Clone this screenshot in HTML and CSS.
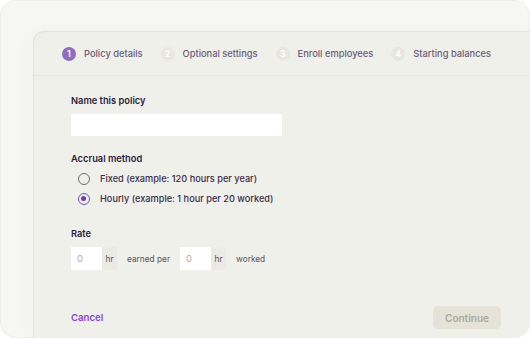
FILE: index.html
```html
<!DOCTYPE html>
<html>
<head>
<meta charset="utf-8">
<link rel="stylesheet" href="styles.css">
</head>
<body>
<div class="outer">
  <div class="card">
    <div class="steps">
      <div class="step active"><span class="num">1</span><span class="label">Policy details</span></div>
      <div class="step"><span class="num">2</span><span class="label">Optional settings</span></div>
      <div class="step"><span class="num">3</span><span class="label">Enroll employees</span></div>
      <div class="step"><span class="num">4</span><span class="label">Starting balances</span></div>
    </div>
    <div class="form">
      <div class="field">
        <div class="flabel">Name this policy</div>
        <div class="text-input"></div>
      </div>
      <div class="field">
        <div class="flabel">Accrual method</div>
        <div class="radios">
          <div class="radio"><span class="dot"></span><span>Fixed (example: 120 hours per year)</span></div>
          <div class="radio checked"><span class="dot"></span><span>Hourly (example: 1 hour per 20 worked)</span></div>
        </div>
      </div>
      <div class="field rate-field">
        <div class="flabel">Rate</div>
        <div class="rate">
          <div class="num-input"><span class="val">0</span><span class="addon">hr</span></div>
          <span class="rate-text">earned per</span>
          <div class="num-input"><span class="val">0</span><span class="addon">hr</span></div>
          <span class="rate-text">worked</span>
        </div>
      </div>
    </div>
    <div class="footer">
      <span class="cancel">Cancel</span>
      <span class="continue">Continue</span>
    </div>
  </div>
</div>
</body>
</html>
```

FILE: styles.css
```css
* { box-sizing: border-box; }
html, body { margin: 0; padding: 0; background: #ffffff; }
body { font-family: "Inter", "Lato", sans-serif; }
.outer {
  width: 530px;
  height: 338px;
  border-radius: 16px;
  background: #f6f6f2;
  padding: 31px 0 0 33px;
  overflow: hidden;
  box-shadow: inset 0 0 0 1px #efefea;
  display: flex;
}
.card {
  flex: 1;
  background: #f0f0eb;
  border-top: 1px solid #e3e3dc;
  border-left: 1px solid #e3e3dc;
  border-radius: 11px 0 0 0;
  display: flex;
  flex-direction: column;
  box-shadow: -6px 0 14px rgba(0,0,0,0.02);
}
.steps {
  height: 44px;
  border-bottom: 1px solid #e6e6e0;
  display: flex;
  align-items: center;
  gap: 18px;
  padding-left: 28px;
}
.step { display: flex; align-items: center; gap: 8px; }
.num {
  width: 14px; height: 14px; border-radius: 50%;
  background: #e8e7df;
  color: #ffffff;
  font-size: 9px; font-weight: 600;
  display: flex; align-items: center; justify-content: center;
}
.step.active .num { background: #8d6fbd; }
.label { font-size: 9.3px; font-weight: 500; color: #6a5c78; }
.form {
  padding: 18px 0 0 37px;
  display: flex;
  flex-direction: column;
  gap: 16px;
  flex: 1;
}
.field { display: flex; flex-direction: column; gap: 7px; }
.rate-field { margin-top: 6px; }
.flabel { font-size: 9.3px; font-weight: 600; color: #2b1d3b; line-height: 13px; }
.text-input { width: 211px; height: 22px; background: #ffffff; border-radius: 1px; }
.radios { display: flex; flex-direction: column; gap: 7px; padding-left: 7px; }
.radio { display: flex; align-items: center; gap: 10px; font-size: 9.2px; font-weight: 500; color: #3a2c48; height: 13px; }
.dot {
  width: 12px; height: 12px; border-radius: 50%;
  border: 1.5px solid #6f6a70; background: transparent;
  position: relative;
}
.radio.checked .dot { border-color: #7a4fb8; }
.radio.checked .dot::after {
  content: ""; position: absolute; left: 2px; top: 2px;
  width: 5px; height: 5px; border-radius: 50%; background: #6a3fb0;
}
.rate { display: flex; align-items: center; }
.num-input { display: flex; height: 23px; margin-right: 10px; }
.num-input .val {
  width: 31px; background: #ffffff; color: #b0aeb0; font-size: 9.5px;
  display: flex; align-items: center; padding-left: 6px;
}
.num-input .addon {
  width: 15px; background: #ebeae4; color: #5a5060; font-size: 8.5px;
  display: flex; align-items: center; justify-content: center;
}
.rate-text { font-size: 8.3px; color: #5a5060; margin-right: 10px; }
.footer {
  display: flex; justify-content: space-between; align-items: center;
  padding: 0 29px 9px 37px;
}
.cancel { color: #8a3fe0; font-size: 9.6px; font-weight: 600; }
.continue {
  width: 68px; height: 23px; border-radius: 5px; background: #e5e3d7;
  color: #aaa89a; font-size: 10px; font-weight: 600;
  display: flex; align-items: center; justify-content: center;
}
```
